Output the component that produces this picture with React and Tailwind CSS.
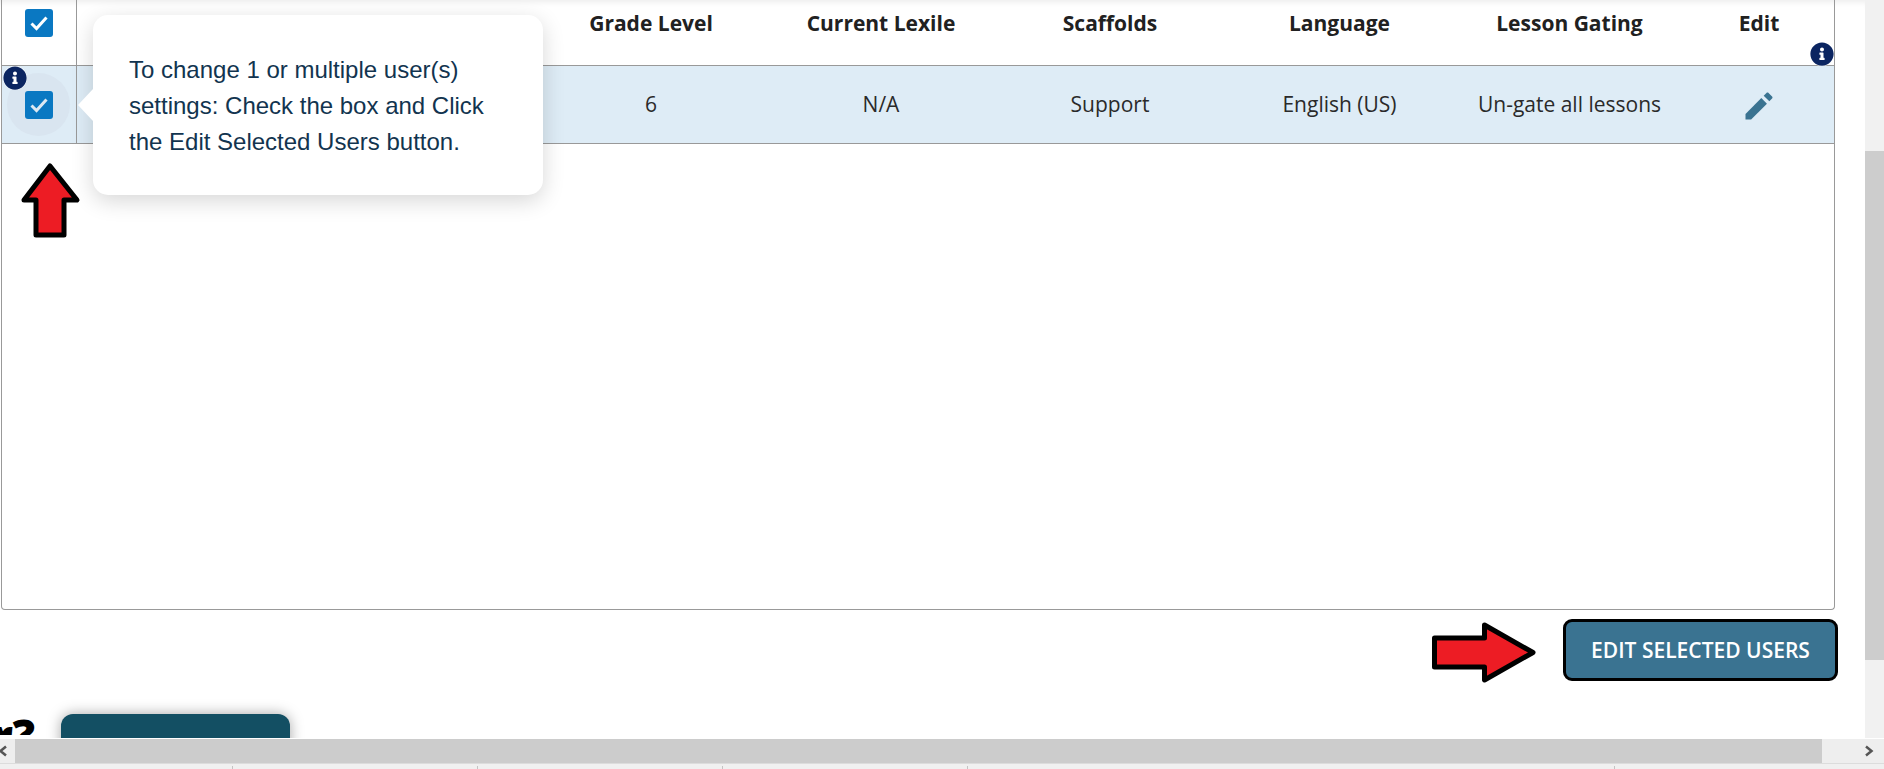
import React from 'react';
import { FaInfoCircle } from 'react-icons/fa';

const columns = [
  { title: 'Grade Level', value: '6' },
  { title: 'Current Lexile', value: 'N/A' },
  { title: 'Scaffolds', value: 'Support' },
  { title: 'Language', value: 'English (US)' },
  { title: 'Lesson Gating', value: 'Un-gate all lessons' },
];

const gridCols = 'grid grid-cols-[75px_459px_230px_230px_228px_231px_229px_1fr]';

const Checkbox = ({ faded }) => (
  <span className="flex h-7 w-7 items-center justify-center rounded-[3px] bg-[#0a78c2]">
    <svg width="28" height="28" viewBox="0 0 28 28" fill="none">
      <polyline
        points="6.5,14.5 11.5,19.5 21.5,8.5"
        stroke={faded ? '#dce8f2' : '#ffffff'}
        strokeWidth="3"
      />
    </svg>
  </span>
);

const InfoBadge = ({ className }) => (
  <span className={`absolute z-10 flex h-6 w-6 items-center justify-center rounded-full bg-white text-[#0b2561] ${className}`}>
    <FaInfoCircle size={24} />
  </span>
);

const EditIcon = () => (
  <svg width="36" height="36" viewBox="0 0 24 24" fill="#3a7391">
    <path d="M3 17.25V21h3.75L17.3 10.45l-3.75-3.75L3 17.25z" />
    <path d="M20.71 7.04c.39-.39.39-1.02 0-1.41l-2.34-2.34c-.39-.39-1.02-.39-1.41 0l-1.83 1.83 3.75 3.75 1.83-1.83z" />
  </svg>
);

const Tooltip = () => (
  <div className="absolute left-[93px] top-[15px] z-20 flex h-[180px] w-[450px] items-center rounded-[15px] bg-white px-9 pt-[2px] font-['Liberation_Sans',sans-serif] text-[24px] leading-[36px] text-[#12344f] shadow-[0_6px_22px_rgba(0,0,0,0.16)]">
    <span className="absolute left-[-15px] top-[74px] h-0 w-0 border-y-[16px] border-r-[15px] border-y-transparent border-r-white" />
    <p>To change 1 or multiple user(s) settings: Check the box and Click the Edit Selected Users button.</p>
  </div>
);

const UpArrow = () => (
  <svg className="absolute left-[19px] top-[161px] z-10" width="64" height="78" viewBox="0 0 64 78">
    <polygon
      points="31,5 58,39 45,39 45,74 17,74 17,39 5,39"
      fill="#ed1c24"
      stroke="#000"
      strokeWidth="5"
      strokeLinejoin="round"
    />
  </svg>
);

const RightArrow = () => (
  <svg className="absolute left-[1431px] top-[621px] z-10" width="108" height="63" viewBox="0 0 108 63">
    <polygon
      points="3.5,17 53.5,17 53.5,4 102,31.5 53.5,59 53.5,46 3.5,46"
      fill="#ed1c24"
      stroke="#000"
      strokeWidth="5"
      strokeLinejoin="round"
    />
  </svg>
);

const UsersTable = () => (
  <div className="ml-px h-[610px] w-[1834px] rounded-b-[4px] border-x border-b border-[#999]">
    {/* Header row */}
    <div className={`${gridCols} h-[66px] border-b border-[#999] text-[21px] font-bold text-[#212121]`}>
      <div className="flex items-center justify-center border-r border-[#999] pb-[20px]">
        <Checkbox />
      </div>
      <div />
      {columns.map((col) => (
        <div key={col.title} className="pt-[8px] text-center">{col.title}</div>
      ))}
      <div className="pt-[8px] text-center">Edit</div>
    </div>

    {/* Selected row */}
    <div className={`${gridCols} h-[78px] border-b border-[#999] bg-[#deecf6] text-[21px] text-[#2a2a2a]`}>
      <div className="relative flex items-center justify-center border-r border-[#999]">
        <span className="absolute left-[5px] top-[7px] h-[63px] w-[63px] rounded-full bg-[#d9e5f0]" />
        <span className="relative"><Checkbox faded /></span>
      </div>
      <div />
      {columns.map((col) => (
        <div key={col.title} className="flex items-center justify-center">{col.value}</div>
      ))}
      <div className="flex items-center justify-center pt-[3px]"><EditIcon /></div>
    </div>
  </div>
);

const BottomBars = () => (
  <>
    <div className="flex h-[25px] flex-none border-t border-white bg-[#eeeeee]">
      <div className="relative w-[15px] flex-none">
        <svg className="absolute left-[-2px] top-[6px]" width="10" height="12" viewBox="0 0 10 12" fill="none">
          <polyline points="8,1.5 2.5,6 8,10.5" stroke="#555" strokeWidth="2.5" />
        </svg>
      </div>
      <div className="w-[1807px] flex-none bg-[#cccccc]" />
      <div className="relative flex-1">
        <svg className="absolute left-[42px] top-[6px]" width="10" height="12" viewBox="0 0 10 12" fill="none">
          <polyline points="2,1.5 7.5,6 2,10.5" stroke="#555" strokeWidth="2.5" />
        </svg>
      </div>
    </div>
    <div className="flex h-[6px] flex-none border-t border-[#dcdcdc] bg-[#f0f0f0]">
      {[233, 245, 245, 245, 647].map((w, i) => (
        <div key={i} className="mt-[2px] border-r border-[#c4c4c4]" style={{ width: w }} />
      ))}
    </div>
  </>
);

export default function App() {
  return (
    <div className="flex h-screen w-full flex-col overflow-hidden bg-white font-['Open_Sans',sans-serif]">
      <div className="flex min-h-0 flex-1">
        <main className="relative min-w-0 flex-1 overflow-hidden shadow-[inset_0_7px_6px_-5px_rgba(0,0,0,0.08)]">
          <UsersTable />

          <div className="mt-[9px] flex justify-end pr-[27px]">
            <button className="flex h-[62px] w-[275px] items-center justify-center rounded-[9px] border-[3px] border-black bg-[#3a7391] pt-[1px] text-[21px] font-semibold text-white">
              EDIT SELECTED USERS
            </button>
          </div>

          {/* Next section, cut off by the scroller */}
          <div className="mt-[33px] flex">
            <div className="flex h-[21px] w-[35px] justify-end overflow-hidden">
              <h2 className="mt-[-9px] whitespace-nowrap text-[44px] leading-[60px] font-extrabold text-black">user?</h2>
            </div>
            <div className="ml-[26px] h-[60px] w-[229px] rounded-t-[12px] bg-[#134f63] shadow-[0_0_14px_rgba(0,0,0,0.35)]" />
          </div>

          <InfoBadge className="left-[3px] top-[66px]" />
          <InfoBadge className="left-[1810px] top-[42px]" />
          <Tooltip />
          <UpArrow />
          <RightArrow />
        </main>

        {/* Vertical scrollbar */}
        <div className="w-[19px] flex-none bg-[#f1f1f1] pt-[151px]">
          <div className="h-[509px] bg-[#cdcdcd]" />
        </div>
      </div>
      <BottomBars />
    </div>
  );
}
